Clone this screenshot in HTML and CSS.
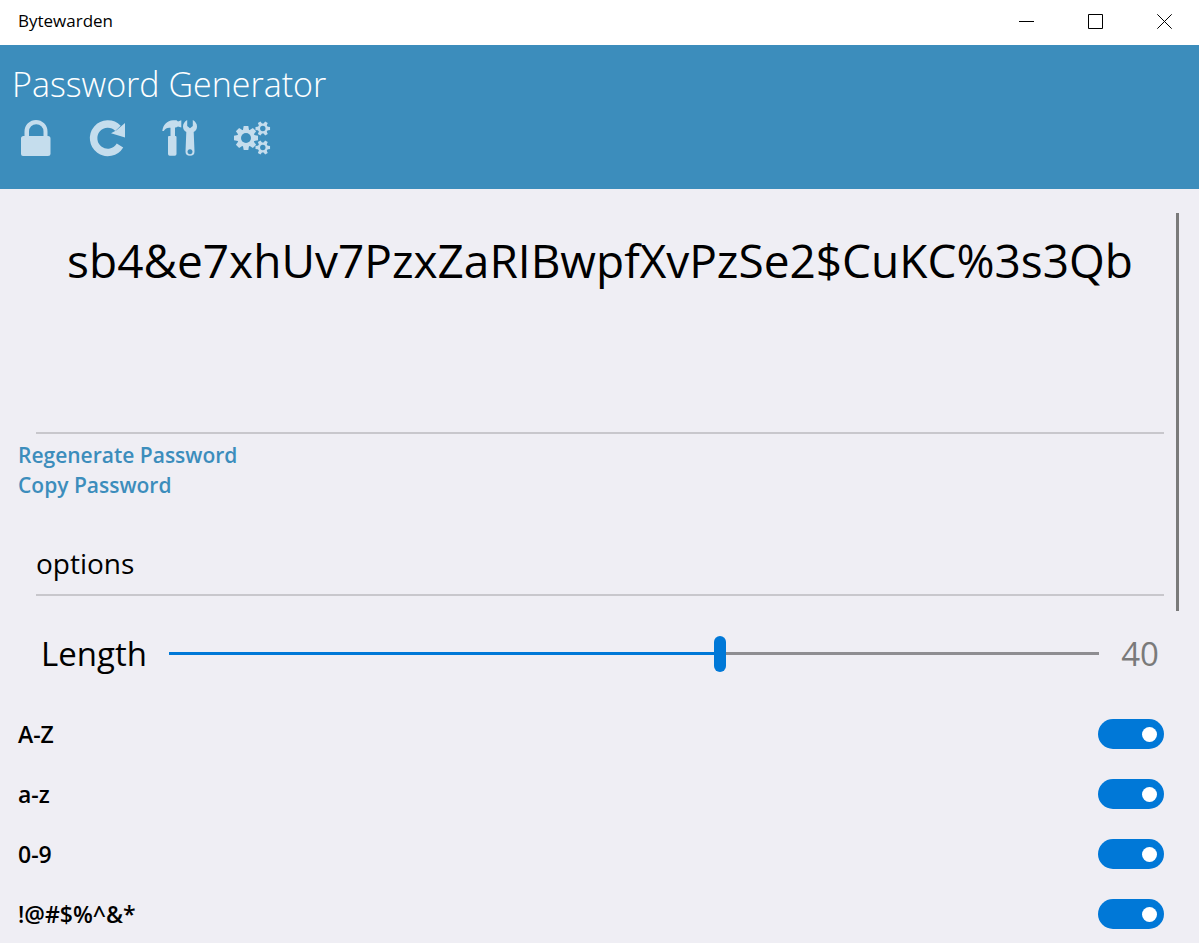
FILE: index.html
```html
<!DOCTYPE html>
<html lang="en">
<head>
<meta charset="utf-8">
<title>Bytewarden</title>
<link rel="stylesheet" href="styles.css">
</head>
<body>
<div class="titlebar">
  <span class="app-name">Bytewarden</span>
  <div class="window-controls">
    <button type="button" aria-label="Minimize"><svg width="15" height="15" viewBox="0 0 15 15"><path d="M0 7.5h15"/></svg></button>
    <button type="button" aria-label="Maximize"><svg width="15" height="15" viewBox="0 0 15 15"><path d="M.5.5h14v14H.5z"/></svg></button>
    <button type="button" aria-label="Close"><svg width="15" height="15" viewBox="0 0 15 15"><path d="M.3.3l14.4 14.4M14.7.3L.3 14.7"/></svg></button>
  </div>
</div>
<header class="header">
  <h1 class="page-title">Password Generator</h1>
  <nav class="toolbar" aria-label="Sections">
    <button type="button" aria-label="Vault">
      <svg width="36" height="36" viewBox="0 0 36 36"><path fill-rule="evenodd" d="M3 18.500q0-2.500 2.500-2.500h1v-4.500a11.500 11.500 0 0 1 23 0v4.500h.5q2.500 0 2.500 2.500v15.500q0 2-2.500 2h-25q-2 0-2-2zM11 16h14.500v-4.500a7.250 7.250 0 0 0-14.500 0z"/></svg>
    </button>
    <button type="button" aria-label="Sync">
      <svg width="36" height="36" viewBox="0 0 36 36"><path class="arc" d="M28 8.300A14.200 14.200 0 1 0 30 25.500"/><path d="M35 3v14.500L21 13.200l5.500-3z"/></svg>
    </button>
    <button type="button" aria-label="Tools">
      <svg width="36" height="36" viewBox="0 0 36 36"><path d="M.3 11C1 5 5 .5 11 .2h3.500l1.500 1.300 3.300-1.200v7.200L16 6.500l-2 1h-1v8.500h.5q1 0 1 1v17q0 1.700-1.700 1.700H7.700Q6 35.700 6 34V17q0-1 1-1h1.500V7.800C5.500 7.300 3.500 8.300 1.800 11z"/><path fill-rule="evenodd" d="M25.200 0v6l2.800 2.200L30.800 6V0q4.200 2.500 4.200 6.500 0 3.500-3.300 5.500l.8 19.500q0 4.300-4.500 4.300t-4.500-4.300l.8-19.500Q21 10 21 6.500q0-4 4.200-6.500zM28 29.200a2.500 2.500 0 1 0 .01 0z"/></svg>
    </button>
    <button type="button" aria-label="Settings">
      <svg width="37" height="36" viewBox="0 0 37 36">
        <defs>
          <path id="tooth" d="M-2.300-12h4.600l.9 5h-6.400z"/>
          <path id="small-tooth" d="M-1.500-7.300h3l.4 3.500h-3.800z"/>
          <mask id="large-hole" maskUnits="userSpaceOnUse" x="-13" y="-13" width="26" height="26"><rect x="-13" y="-13" width="26" height="26" fill="#fff"/><circle r="5" fill="#000"/></mask>
          <mask id="small-hole" maskUnits="userSpaceOnUse" x="-8" y="-8" width="16" height="16"><rect x="-8" y="-8" width="16" height="16" fill="#fff"/><circle r="2.700" fill="#000"/></mask>
          <g id="small-gear" mask="url(#small-hole)">
            <circle r="5"/>
            <use href="#small-tooth" transform="rotate(30)"/>
            <use href="#small-tooth" transform="rotate(90)"/>
            <use href="#small-tooth" transform="rotate(150)"/>
            <use href="#small-tooth" transform="rotate(210)"/>
            <use href="#small-tooth" transform="rotate(270)"/>
            <use href="#small-tooth" transform="rotate(330)"/>
          </g>
        </defs>
        <g transform="translate(12 18)" mask="url(#large-hole)">
          <circle r="8.800"/>
          <use href="#tooth"/>
          <use href="#tooth" transform="rotate(45)"/>
          <use href="#tooth" transform="rotate(90)"/>
          <use href="#tooth" transform="rotate(135)"/>
          <use href="#tooth" transform="rotate(180)"/>
          <use href="#tooth" transform="rotate(225)"/>
          <use href="#tooth" transform="rotate(270)"/>
          <use href="#tooth" transform="rotate(315)"/>
        </g>
        <use href="#small-gear" transform="translate(28.800 8.500)"/>
        <use href="#small-gear" transform="translate(28.800 27.500)"/>
      </svg>
    </button>
  </nav>
</header>
<main class="content">
  <div class="scrollbar" aria-hidden="true"></div>
  <output class="password">sb4&amp;e7xhUv7PzxZaRIBwpfXvPzSe2$CuKC%3s3Qb</output>
  <div class="actions">
    <a href="#regenerate">Regenerate Password</a>
    <a href="#copy">Copy Password</a>
  </div>
  <h2 class="section-title">options</h2>
  <div class="length-row">
    <label for="length">Length</label>
    <input class="slider" type="range" id="length" min="5" max="64" value="40">
    <output class="length-value" for="length">40</output>
  </div>
  <div class="switches">
    <label class="switch-row">A-Z<input class="switch" type="checkbox" role="switch" checked></label>
    <label class="switch-row">a-z<input class="switch" type="checkbox" role="switch" checked></label>
    <label class="switch-row">0-9<input class="switch" type="checkbox" role="switch" checked></label>
    <label class="switch-row">!@#$%^&amp;*<input class="switch" type="checkbox" role="switch" checked></label>
  </div>
</main>
</body>
</html>
```

FILE: styles.css
```css
* {
  box-sizing: border-box;
}

body {
  display: flex;
  flex-direction: column;
  height: 100vh;
  margin: 0;
  overflow: hidden;
  background: #efeef4;
  color: #000;
  font-family: "Segoe UI", "Open Sans", "Noto Sans", sans-serif;
}

button {
  padding: 0;
  border: 0;
  background: none;
}

svg {
  display: block;
}

.titlebar {
  display: flex;
  flex: none;
  align-items: flex-start;
  justify-content: space-between;
  height: 45px;
  padding-left: 18px;
  background: #fff;
}

.app-name {
  font-size: 17px;
  line-height: 42px;
}

.window-controls {
  display: flex;
  align-self: stretch;
}

.window-controls button {
  display: grid;
  place-items: center;
  width: 69px;
  padding-bottom: 2px;
}

.window-controls path {
  fill: none;
  stroke: #000;
}

.header {
  flex: none;
  height: 144px;
  padding: 15px 12px;
  background: #3c8dbc;
}

.page-title {
  margin: 0;
  color: #fff;
  font-size: 34px;
  font-weight: 300;
  line-height: 48px;
}

.toolbar {
  display: flex;
  gap: 36px;
  padding: 12px 6px;
}

.toolbar button {
  width: 36px;
}

.toolbar svg {
  overflow: visible;
  fill: #c5dded;
}

.toolbar .arc {
  fill: none;
  stroke: #c5dded;
  stroke-width: 7.500;
}

.content {
  position: relative;
  flex: 1;
  min-height: 0;
  overflow: hidden;
}

.scrollbar {
  position: absolute;
  top: 24px;
  right: 20px;
  width: 3px;
  height: 398px;
  background: #7a7a7a;
}

.password {
  display: block;
  height: 245px;
  margin: 0 35px 0 36px;
  padding-top: 39px;
  border-bottom: 2px solid #c8c7cc;
  font-size: 46px;
  line-height: 64px;
  text-align: center;
  white-space: nowrap;
}

.actions {
  display: flex;
  flex-direction: column;
  align-items: flex-start;
  padding: 6px 18px 0;
}

.actions a {
  color: #3c8dbc;
  font-size: 21px;
  font-weight: 600;
  line-height: 30px;
  text-decoration: none;
}

.section-title {
  margin: 42px 35px 0 36px;
  padding-bottom: 10px;
  border-bottom: 2px solid #c8c7cc;
  font-size: 28px;
  font-weight: 400;
  line-height: 42px;
}

.length-row {
  display: flex;
  align-items: center;
  gap: 22px;
  height: 108px;
  padding: 8px 40px 0 41px;
  font-size: 33px;
  line-height: 48px;
}

.length-value {
  color: #7a7a7a;
}

.slider {
  flex: 1;
  min-width: 0;
  height: 36px;
  margin: 0;
  appearance: none;
  background: none;
}

.slider::-webkit-slider-runnable-track {
  height: 4px;
  border-bottom: 1px solid transparent;
  background: linear-gradient(to right, #0078d7 59%, #8e8d91 59%) padding-box;
}

.slider::-webkit-slider-thumb {
  width: 12px;
  height: 36px;
  margin-top: -16px;
  border-radius: 6px;
  appearance: none;
  background: #0078d7;
}

.switch-row {
  display: flex;
  align-items: center;
  justify-content: space-between;
  height: 60px;
  padding: 0 35px 0 18px;
  font-size: 23px;
  font-weight: 600;
  line-height: 30px;
}

.switch {
  display: flex;
  align-items: center;
  justify-content: flex-end;
  width: 66px;
  height: 30px;
  margin: 0;
  padding-right: 7px;
  border-radius: 15px;
  appearance: none;
  background: #0078d7;
}

.switch::before {
  width: 15px;
  height: 15px;
  border-radius: 50%;
  background: #fff;
  content: "";
}

.switch:not(:checked) {
  justify-content: flex-start;
  padding-left: 7px;
  background: #8e8d91;
}
```
